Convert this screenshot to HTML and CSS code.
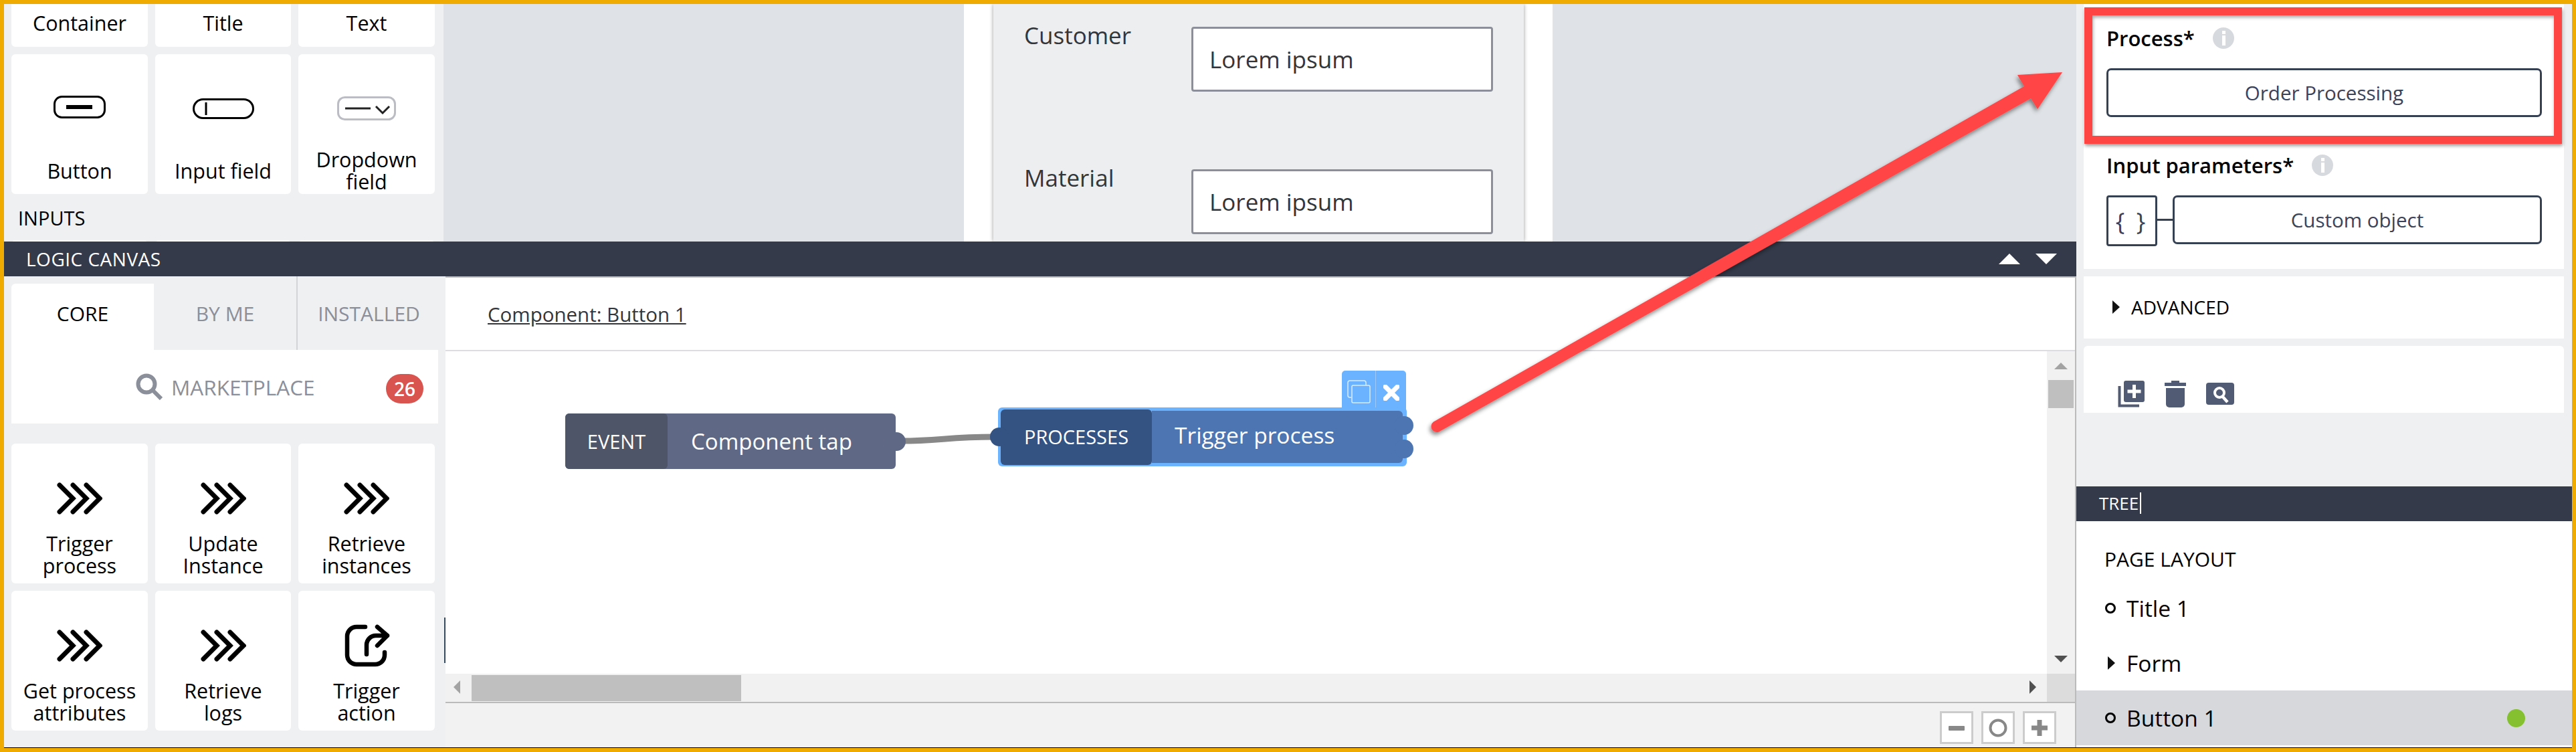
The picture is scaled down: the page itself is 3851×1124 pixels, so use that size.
FILE: index.html
```html
<!DOCTYPE html>
<html lang="en">
<head>
    <meta charset="UTF-8">
    <title>Logic canvas</title>
    <link rel="stylesheet" href="styles.css">
</head>
<body>
<div class="frame">
    <div class="workspace">
        <div class="top-area">
            <div class="palette">
                <div class="card card-short"><span class="label">Container</span></div>
                <div class="card card-short"><span class="label">Title</span></div>
                <div class="card card-short"><span class="label">Text</span></div>
                <div class="card card-tall">
                    <div class="card-icon">
                        <svg width="78" height="34" viewBox="0 0 78 34"><rect x="1.5" y="1.5" width="75" height="31" rx="11" fill="none" stroke="#000" stroke-width="3"/><rect x="19" y="14" width="39" height="6"/></svg>
                    </div>
                    <div class="label">Button</div>
                </div>
                <div class="card card-tall">
                    <div class="card-icon">
                        <svg width="92" height="31" viewBox="0 0 92 31" class="icon-down"><rect x="1.5" y="1.5" width="89" height="28" rx="14" fill="none" stroke="#000" stroke-width="3"/><rect x="18.500" y="6" width="3" height="19"/></svg>
                    </div>
                    <div class="label">Input field</div>
                </div>
                <div class="card card-tall">
                    <div class="card-icon">
                        <svg width="88" height="36" viewBox="0 0 88 36" class="icon-down"><rect x="1.5" y="1.5" width="85" height="33" rx="10" fill="none" stroke="#bbbcc4" stroke-width="3"/><path d="M12 18H50M58 15l10 10 10-10" fill="none" stroke="#222" stroke-width="3"/></svg>
                    </div>
                    <div class="label">Dropdown<br>field</div>
                </div>
                <div class="section-label">INPUTS</div>
                <div class="card card-cut"></div>
                <div class="card card-cut"></div>
                <div class="card card-cut"></div>
            </div>
            <div class="page-preview">
                <div class="form-panel">
                    <div class="form-row">
                        <div class="form-label">Customer</div>
                        <div class="form-input">Lorem ipsum</div>
                    </div>
                    <div class="form-row">
                        <div class="form-label">Material</div>
                        <div class="form-input">Lorem ipsum</div>
                    </div>
                </div>
            </div>
        </div>

        <div class="bar logic-bar">
            <span>LOGIC CANVAS</span>
            <div class="bar-arrows">
                <span class="tri-up"></span>
                <span class="tri-down"></span>
            </div>
        </div>

        <div class="logic-body">
            <div class="library">
                <div class="tabs">
                    <div class="tab tab-active">CORE</div>
                    <div class="tab">BY ME</div>
                    <div class="tab tab-last">INSTALLED</div>
                </div>
                <div class="market">
                    <svg width="40" height="40" viewBox="0 0 40 40"><circle cx="16" cy="16" r="12.500" fill="none" stroke="#8a8f9a" stroke-width="6"/><path d="M25 25L38 38" stroke="#8a8f9a" stroke-width="6"/></svg>
                    <span class="market-text">MARKETPLACE</span>
                    <span class="badge">26</span>
                </div>
                <div class="tools">
                    <div class="card tool-card">
                        <div class="tool-icon"><svg class="chevrons" width="68" height="48" viewBox="0 0 68 48"><path d="M4 4L24 24L4 44M24 4L44 24L24 44M44 4L64 24L44 44"/></svg></div>
                        <div class="label">Trigger<br>process</div>
                    </div>
                    <div class="card tool-card">
                        <div class="tool-icon"><svg class="chevrons" width="68" height="48" viewBox="0 0 68 48"><path d="M4 4L24 24L4 44M24 4L44 24L24 44M44 4L64 24L44 44"/></svg></div>
                        <div class="label">Update<br>Instance</div>
                    </div>
                    <div class="card tool-card">
                        <div class="tool-icon"><svg class="chevrons" width="68" height="48" viewBox="0 0 68 48"><path d="M4 4L24 24L4 44M24 4L44 24L24 44M44 4L64 24L44 44"/></svg></div>
                        <div class="label">Retrieve<br>instances</div>
                    </div>
                    <div class="card tool-card">
                        <div class="tool-icon"><svg class="chevrons" width="68" height="48" viewBox="0 0 68 48"><path d="M4 4L24 24L4 44M24 4L44 24L24 44M44 4L64 24L44 44"/></svg></div>
                        <div class="label">Get process<br>attributes</div>
                    </div>
                    <div class="card tool-card">
                        <div class="tool-icon"><svg class="chevrons" width="68" height="48" viewBox="0 0 68 48"><path d="M4 4L24 24L4 44M24 4L44 24L24 44M44 4L64 24L44 44"/></svg></div>
                        <div class="label">Retrieve<br>logs</div>
                    </div>
                    <div class="card tool-card">
                        <div class="tool-icon"><svg class="share" width="70" height="66" viewBox="0 0 70 66"><path d="M33 5H20a14 14 0 0 0-14 14V47a14 14 0 0 0 14 14H48a14 14 0 0 0 14-14V43M35 46V32a14 14 0 0 1 14-14H66M51 5L66 18L51 33"/></svg></div>
                        <div class="label">Trigger<br>action</div>
                    </div>
                </div>
                <div class="library-mark"></div>
            </div>

            <div class="canvas">
                <div class="canvas-head"><span class="canvas-title">Component: Button 1</span></div>
                <div class="board">
                    <div class="stage">
                        <svg class="wire" width="160" height="30" viewBox="680 120 160 30"><path d="M680 134C740 134 750 128 820 128" fill="none" stroke="#888" stroke-width="9"/></svg>
                        <div class="node node-event">
                            <div class="node-tag">EVENT</div>
                            <div class="node-name">Component tap</div>
                            <span class="port port-event"></span>
                        </div>
                        <div class="node-tools">
                            <div class="node-tool tool-copy">
                                <svg width="38" height="38" viewBox="0 0 38 38" fill="none" stroke="#dcedff" stroke-width="1.500"><path d="M8 27H6a3 3 0 0 1-3-3V5a3 3 0 0 1 3-3H27a3 3 0 0 1 3 3V9"/><rect x="9" y="9" width="27" height="26" rx="2"/></svg>
                            </div>
                            <div class="node-tool">
                                <svg width="24" height="24" viewBox="0 0 24 24"><path d="M3 3L21 21M21 3L3 21" stroke="#fff" stroke-width="7" stroke-linecap="round"/></svg>
                            </div>
                        </div>
                        <div class="node node-process">
                            <div class="node-tag">PROCESSES</div>
                            <div class="node-name">Trigger process</div>
                            <span class="port port-in"></span>
                            <span class="port port-out port-out-a"></span>
                            <span class="port port-out port-out-b"></span>
                        </div>
                    </div>
                    <div class="vscroll">
                        <span class="sc-up"></span>
                        <span class="vthumb"></span>
                        <span class="sc-down"></span>
                    </div>
                </div>
                <div class="hscroll">
                    <span class="sc-left"></span>
                    <span class="hthumb"></span>
                    <span class="sc-right"></span>
                    <span class="sc-corner"></span>
                </div>
                <div class="zoom-bar">
                    <div class="zoom-btn"><svg width="26" height="26" viewBox="0 0 26 26"><rect x="1" y="10" width="24" height="7" rx="1" fill="#888"/></svg></div>
                    <div class="zoom-btn"><svg width="28" height="28" viewBox="0 0 28 28"><circle cx="14" cy="14" r="11.500" fill="none" stroke="#888" stroke-width="4"/></svg></div>
                    <div class="zoom-btn"><svg width="26" height="26" viewBox="0 0 26 26"><path d="M1 13H25M13 1V25" stroke="#888" stroke-width="7"/></svg></div>
                </div>
            </div>
        </div>
    </div>

    <div class="sidebar">
        <div class="side-card card-props">
            <div class="prop-label prop-first">Process*
                <svg class="info" width="32" height="34" viewBox="0 0 32 34"><circle cx="16" cy="17" r="16" fill="#d6d9de"/><rect x="14" y="6" width="5" height="5" fill="#fff"/><rect x="14" y="13" width="5" height="15" fill="#fff"/></svg>
            </div>
            <div class="prop-btn">Order Processing</div>
            <div class="prop-label prop-second">Input parameters*
                <svg class="info" width="32" height="34" viewBox="0 0 32 34"><circle cx="16" cy="17" r="16" fill="#d6d9de"/><rect x="14" y="6" width="5" height="5" fill="#fff"/><rect x="14" y="13" width="5" height="15" fill="#fff"/></svg>
            </div>
            <div class="param-row">
                <div class="param-type">{ }</div>
                <div class="param-line"></div>
                <div class="prop-btn param-btn">Custom object</div>
            </div>
        </div>
        <div class="side-card card-advanced">
            <span class="tri-right"></span>
            <span>ADVANCED</span>
        </div>
        <div class="side-card card-actions">
            <svg width="40" height="40" viewBox="0 0 40 40"><path d="M2.500 8V37.500H32" fill="none" stroke="#525b74" stroke-width="4"/><rect x="9" y="0" width="31" height="32" rx="3" fill="#525b74"/><path d="M24.500 6V26M14.500 16H34.500" stroke="#fff" stroke-width="5"/></svg>
            <svg width="32" height="40" viewBox="0 0 32 40" fill="#525b74"><path d="M10 0H22V3H32V8H0V3H10Z"/><path d="M2 11H30V35a5 5 0 0 1-5 5H7a5 5 0 0 1-5-5Z"/></svg>
            <svg width="42" height="33" viewBox="0 0 42 33" class="icon-low"><rect width="42" height="33" rx="4" fill="#525b74"/><circle cx="20" cy="15" r="7" fill="none" stroke="#fff" stroke-width="4"/><path d="M24 20L32 29" stroke="#fff" stroke-width="4.500"/></svg>
        </div>
        <div class="side-gap"></div>
        <div class="bar tree-bar"><span class="tree-title">TREE</span></div>
        <div class="tree">
            <div class="tree-head">PAGE LAYOUT</div>
            <div class="tree-row"><span class="tree-mark"><span class="bullet"></span></span>Title 1</div>
            <div class="tree-row"><span class="tree-mark"><span class="tri-right"></span></span>Form</div>
            <div class="tree-row tree-selected"><span class="tree-mark"><span class="bullet"></span></span>Button 1<span class="dot"></span></div>
        </div>
        <div class="highlight"></div>
    </div>

    <svg class="arrow" width="3851" height="1124" viewBox="0 0 3851 1124">
        <defs>
            <filter id="arrowShadow" x="-5%" y="-5%" width="110%" height="110%">
                <feDropShadow dx="-2" dy="4" stdDeviation="3" flood-color="#000" flood-opacity="0.45"/>
            </filter>
        </defs>
        <path d="M3083 108L3016 112L3026 129L2143 630.600A8.500 8.500 0 0 0 2151 645.400L3036 147L3046 163Z" fill="#ff4444" filter="url(#arrowShadow)"/>
    </svg>
</div>
</body>
</html>
```

FILE: styles.css
```css
* {
    box-sizing: border-box;
}

body {
    margin: 0;
    font-family: "Open Sans", "Noto Sans", sans-serif;
    color: #000;
    background: #f0ab00;
}

.frame {
    position: relative;
    display: flex;
    width: 3851px;
    height: 1124px;
    overflow: hidden;
    border: 6px solid #f0ab00;
}

.workspace {
    width: 3098px;
    display: flex;
    flex-direction: column;
    border-bottom: 1px solid #000;
    height: 1112px;
}

.top-area {
    display: flex;
    height: 355px;
    background: #dfe2e6;
    overflow: hidden;
}

/* palette */
.palette {
    width: 657px;
    flex: none;
    display: grid;
    grid-template-columns: 204px 203px 204px;
    grid-template-rows: 64px 209px 47px 40px;
    column-gap: 11px;
    row-gap: 11px;
    padding-left: 11px;
    background: #eff0f2;
    align-content: start;
}

.card {
    background: #fff;
    border-radius: 6px;
    display: flex;
    flex-direction: column;
    align-items: center;
}

.label {
    font-size: 30.500px;
    line-height: 33px;
    text-align: center;
}

.card-short {
    border-radius: 0 0 6px 6px;
    padding-top: 12px;
}

.card-tall {
    padding-top: 39px;
}

.card-tall .label {
    height: 66px;
    display: flex;
    align-items: center;
    justify-content: center;
}

.card-icon {
    height: 80px;
    margin-bottom: 22px;
    display: flex;
    align-items: center;
    justify-content: center;
}

.icon-down {
    margin-top: 4px;
}

.section-label {
    grid-column: 1 / 4;
    padding-left: 10px;
    font-size: 29px;
    line-height: 50px;
}

/* preview of the page */
.page-preview {
    width: 880px;
    margin-left: 778px;
    padding: 0 43px 0 44px;
    background: #fff;
}

.form-panel {
    height: 100%;
    padding: 25px 0 0 46px;
    background: #edeef0;
    box-shadow: 0 0 6px rgba(0, 0, 0, 0.4);
}

.form-row {
    display: flex;
    height: 106px;
    margin-bottom: 107px;
}

.form-label {
    width: 250px;
    font-size: 35px;
    line-height: 44px;
    color: #32363a;
}

.form-input {
    width: 451px;
    height: 97px;
    margin-top: 9px;
    padding-left: 24px;
    display: flex;
    align-items: center;
    background: #fff;
    border: 3px solid #8c8f99;
    border-radius: 4px;
    font-size: 35px;
    color: #32363a;
}

/* dark headers */
.bar {
    height: 52px;
    flex: none;
    display: flex;
    align-items: center;
    background: #343a4a;
    color: #fff;
    font-size: 28px;
}

.logic-bar {
    justify-content: space-between;
    padding: 0 29px 0 33px;
    letter-spacing: 0.5px;
}

.bar-arrows {
    display: flex;
    gap: 23px;
}

.tri-up {
    border-left: 16px solid transparent;
    border-right: 16px solid transparent;
    border-bottom: 16px solid #fff;
}

.tri-down {
    border-left: 16px solid transparent;
    border-right: 16px solid transparent;
    border-top: 16px solid #fff;
}

.logic-body {
    flex: 1;
    display: flex;
    min-height: 0;
}

/* left library */
.library {
    position: relative;
    width: 660px;
    flex: none;
    padding-left: 11px;
    background: #eff0f2;
}

.tabs {
    display: flex;
    height: 110px;
    margin-right: -2px;
}

.tab {
    width: 213px;
    margin-top: 11px;
    padding-top: 24px;
    text-align: center;
    font-size: 30px;
    line-height: 42px;
    color: #8a8f9a;
}

.tab-active {
    background: #fff;
    color: #000;
    border-radius: 6px 0 0 0;
}

.tab-last {
    width: 223px;
    margin-top: 0;
    padding: 35px 8px 0 0;
    border-left: 2px solid #d3d4d8;
}

.market {
    width: 638px;
    height: 110px;
    padding: 0 22px 0 186px;
    display: flex;
    align-items: center;
    background: #fff;
}

.market-text {
    margin-left: 13px;
    font-size: 31.500px;
    color: #8a8f9a;
}

.badge {
    width: 56px;
    height: 44px;
    margin-left: auto;
    margin-top: 6px;
    border-radius: 22px;
    background: #d9534f;
    color: #fff;
    font-size: 28px;
    font-weight: 600;
    line-height: 44px;
    text-align: center;
}

.tools {
    display: grid;
    grid-template-columns: 204px 203px 204px;
    grid-auto-rows: 209px;
    column-gap: 11px;
    row-gap: 11px;
    padding-top: 30px;
}

.tool-card {
    padding-top: 42px;
}

.tool-icon {
    height: 80px;
    margin-bottom: 11px;
    display: flex;
    align-items: center;
    justify-content: center;
}

.chevrons path {
    fill: none;
    stroke: #000;
    stroke-width: 7;
    stroke-linecap: round;
}

.share path {
    fill: none;
    stroke: #000;
    stroke-width: 6.500;
    stroke-linecap: round;
    stroke-linejoin: round;
}

.library-mark {
    position: absolute;
    right: 0;
    top: 510px;
    width: 2px;
    height: 68px;
    background: #354a5f;
}

/* logic canvas */
.canvas {
    width: 2438px;
    display: flex;
    flex-direction: column;
    background: #fff;
    border-top: 2px solid #bbb;
    border-right: 2px solid #bbb;
}

.canvas-head {
    height: 110px;
    flex: none;
    padding-left: 63px;
    display: flex;
    align-items: center;
    border-bottom: 2px solid #dcdce2;
}

.canvas-title {
    font-size: 29.500px;
    font-weight: 500;
    color: #32363a;
    text-decoration: underline;
}

.board {
    flex: 1;
    display: flex;
    min-height: 0;
}

.stage {
    position: relative;
    flex: 1;
}

.wire {
    position: absolute;
    left: 680px;
    top: 120px;
}

.node {
    position: absolute;
    display: flex;
    color: #fff;
}

.node-event {
    left: 179px;
    top: 93px;
    width: 494px;
    height: 83px;
    border-radius: 6px;
    background: #5f6985;
}

.node-event .node-tag {
    width: 153px;
    background: #4f5568;
}

.node-tag {
    flex: none;
    display: flex;
    align-items: center;
    justify-content: center;
    border-radius: 6px;
    font-size: 29px;
}

.node-name {
    padding-left: 35px;
    display: flex;
    align-items: center;
    font-size: 33px;
}

.node-process {
    left: 826px;
    top: 84px;
    width: 611px;
    height: 88px;
    padding: 3px 6px 2px 4px;
    border-radius: 6px;
    background: #6bb3ff;
}

.node-process .node-tag {
    width: 226px;
    padding-bottom: 3px;
    background: #345382;
}

.node-process .node-name {
    flex: 1;
    margin: 2px 0 3px;
    padding: 0 0 7px 34px;
    border-radius: 0 6px 6px 0;
    background: #4c75b2;
    font-size: 33.500px;
}

.port {
    position: absolute;
    width: 28px;
    height: 28px;
    border-radius: 50%;
}

.port-event {
    left: 481px;
    top: 28px;
    background: #5f6985;
}

.port-in {
    left: -12px;
    top: 30px;
    background: #345382;
}

.port-out {
    left: 593px;
    background: #4c75b2;
}

.port-out-a {
    top: 13px;
}

.port-out-b {
    top: 48px;
}

.node-tools {
    position: absolute;
    left: 1340px;
    top: 29px;
    display: flex;
    width: 96px;
    height: 58px;
    border-radius: 5px 5px 0 0;
    background: #6bb3ff;
}

.node-tool {
    flex: 1;
    padding-top: 21px;
    display: flex;
    justify-content: center;
}

.tool-copy {
    flex: none;
    width: 51px;
    padding-top: 13px;
    border-right: 1px solid #9bcaff;
}

/* scrollbars */
.vscroll {
    position: relative;
    width: 42px;
    flex: none;
    padding: 43px 2px 0;
    background: #f1f1f1;
}

.vthumb {
    display: block;
    height: 42px;
    background: #bfbfbf;
}

.sc-up {
    position: absolute;
    left: 11px;
    top: 17px;
    border-left: 10px solid transparent;
    border-right: 10px solid transparent;
    border-bottom: 10px solid #a3a3a3;
}

.sc-down {
    position: absolute;
    left: 11px;
    bottom: 17px;
    border-left: 10px solid transparent;
    border-right: 10px solid transparent;
    border-top: 10px solid #505050;
}

.hscroll {
    position: relative;
    height: 44px;
    flex: none;
    padding: 2px 0 1px 39px;
    background: #f1f1f1;
    border-bottom: 2px solid #bbb;
}

.hthumb {
    display: block;
    width: 403px;
    height: 39px;
    background: #bfbfbf;
}

.sc-left {
    position: absolute;
    left: 12px;
    top: 10px;
    border-top: 10px solid transparent;
    border-bottom: 10px solid transparent;
    border-right: 10px solid #a3a3a3;
}

.sc-right {
    position: absolute;
    right: 58px;
    top: 10px;
    border-top: 10px solid transparent;
    border-bottom: 10px solid transparent;
    border-left: 10px solid #505050;
}

.sc-corner {
    position: absolute;
    right: 0;
    top: 0;
    width: 42px;
    height: 42px;
    background: #dcdcdc;
}

.zoom-bar {
    height: 66px;
    flex: none;
    display: flex;
    justify-content: flex-end;
    gap: 12px;
    padding: 12px 28px 0 0;
    background: #f2f2f2;
}

.zoom-btn {
    width: 50px;
    height: 49px;
    display: flex;
    align-items: center;
    justify-content: center;
    background: #fff;
    border: 3px solid #ccc;
}

/* right sidebar */
.sidebar {
    position: relative;
    width: 741px;
    height: 1112px;
    display: flex;
    flex-direction: column;
    background: #eff0f2;
    border-bottom: 1px solid #000;
}

.side-card {
    flex: none;
    margin: 0 12px 11px 11px;
    background: #fff;
}

.card-props {
    height: 396px;
    padding: 0 33px 0 34px;
}

.prop-label {
    display: flex;
    align-items: flex-start;
    gap: 27px;
    font-size: 31px;
    font-weight: 600;
    line-height: 44px;
}

.prop-first {
    padding-top: 29px;
    height: 96px;
}

.prop-second {
    padding-top: 50px;
    height: 117px;
}

.info {
    margin-top: 5px;
}

.prop-btn {
    height: 73px;
    display: flex;
    align-items: center;
    justify-content: center;
    border: 3px solid #354052;
    border-radius: 7px;
    font-size: 29.500px;
    color: #3c4257;
}

.param-row {
    display: flex;
    align-items: flex-start;
}

.param-type {
    width: 76px;
    height: 76px;
    flex: none;
    display: flex;
    align-items: center;
    justify-content: center;
    border: 3px solid #354052;
    border-radius: 4px;
    font-size: 36px;
    letter-spacing: 4px;
    color: #3c4257;
}

.param-line {
    width: 23px;
    height: 3px;
    margin-top: 35px;
    background: #354052;
}

.param-btn {
    flex: 1;
}

.card-advanced {
    height: 93px;
    padding: 0 0 2px 43px;
    display: flex;
    align-items: center;
    gap: 17px;
    font-size: 28px;
}

.tri-right {
    display: block;
    border-top: 10px solid transparent;
    border-bottom: 10px solid transparent;
    border-left: 11px solid #111;
}

.card-actions {
    height: 100px;
    padding: 52px 0 0 51px;
    display: flex;
    align-items: flex-start;
    gap: 30px;
    border-radius: 6px 6px 0 0;
}

.icon-low {
    margin-top: 3px;
}

.side-gap {
    flex: 1;
}

.tree-bar {
    padding: 0 0 2px 34px;
    font-size: 26px;
}

.tree-title {
    padding-right: 2px;
    line-height: 32px;
    border-right: 2px solid #fff;
}

.tree {
    height: 338px;
    flex: none;
    background: #fff;
}

.tree-head {
    height: 89px;
    padding: 38px 0 0 42px;
    font-size: 30px;
    line-height: 38px;
}

.tree-row {
    height: 82px;
    padding: 0 70px 0 43px;
    display: flex;
    align-items: center;
    font-size: 33.500px;
}

.tree-mark {
    width: 32px;
    flex: none;
    display: flex;
    padding-left: 4px;
}

.bullet {
    display: block;
    width: 16px;
    height: 16px;
    margin-left: -4px;
    border: 3px solid #000;
    border-radius: 50%;
}

.tree-selected {
    background: #d6d8dc;
}

.dot {
    width: 27px;
    height: 27px;
    margin-left: auto;
    border-radius: 50%;
    background: #84c02f;
}

/* callouts on top of the screenshot */
.highlight {
    position: absolute;
    left: 12px;
    top: 5px;
    width: 714px;
    height: 204px;
    border: 12px solid #ff4444;
    box-shadow: 1px 3px 5px rgba(0, 0, 0, 0.4), inset 1px 3px 5px rgba(0, 0, 0, 0.35);
}

.arrow {
    position: absolute;
    left: -6px;
    top: -6px;
    pointer-events: none;
}
```
